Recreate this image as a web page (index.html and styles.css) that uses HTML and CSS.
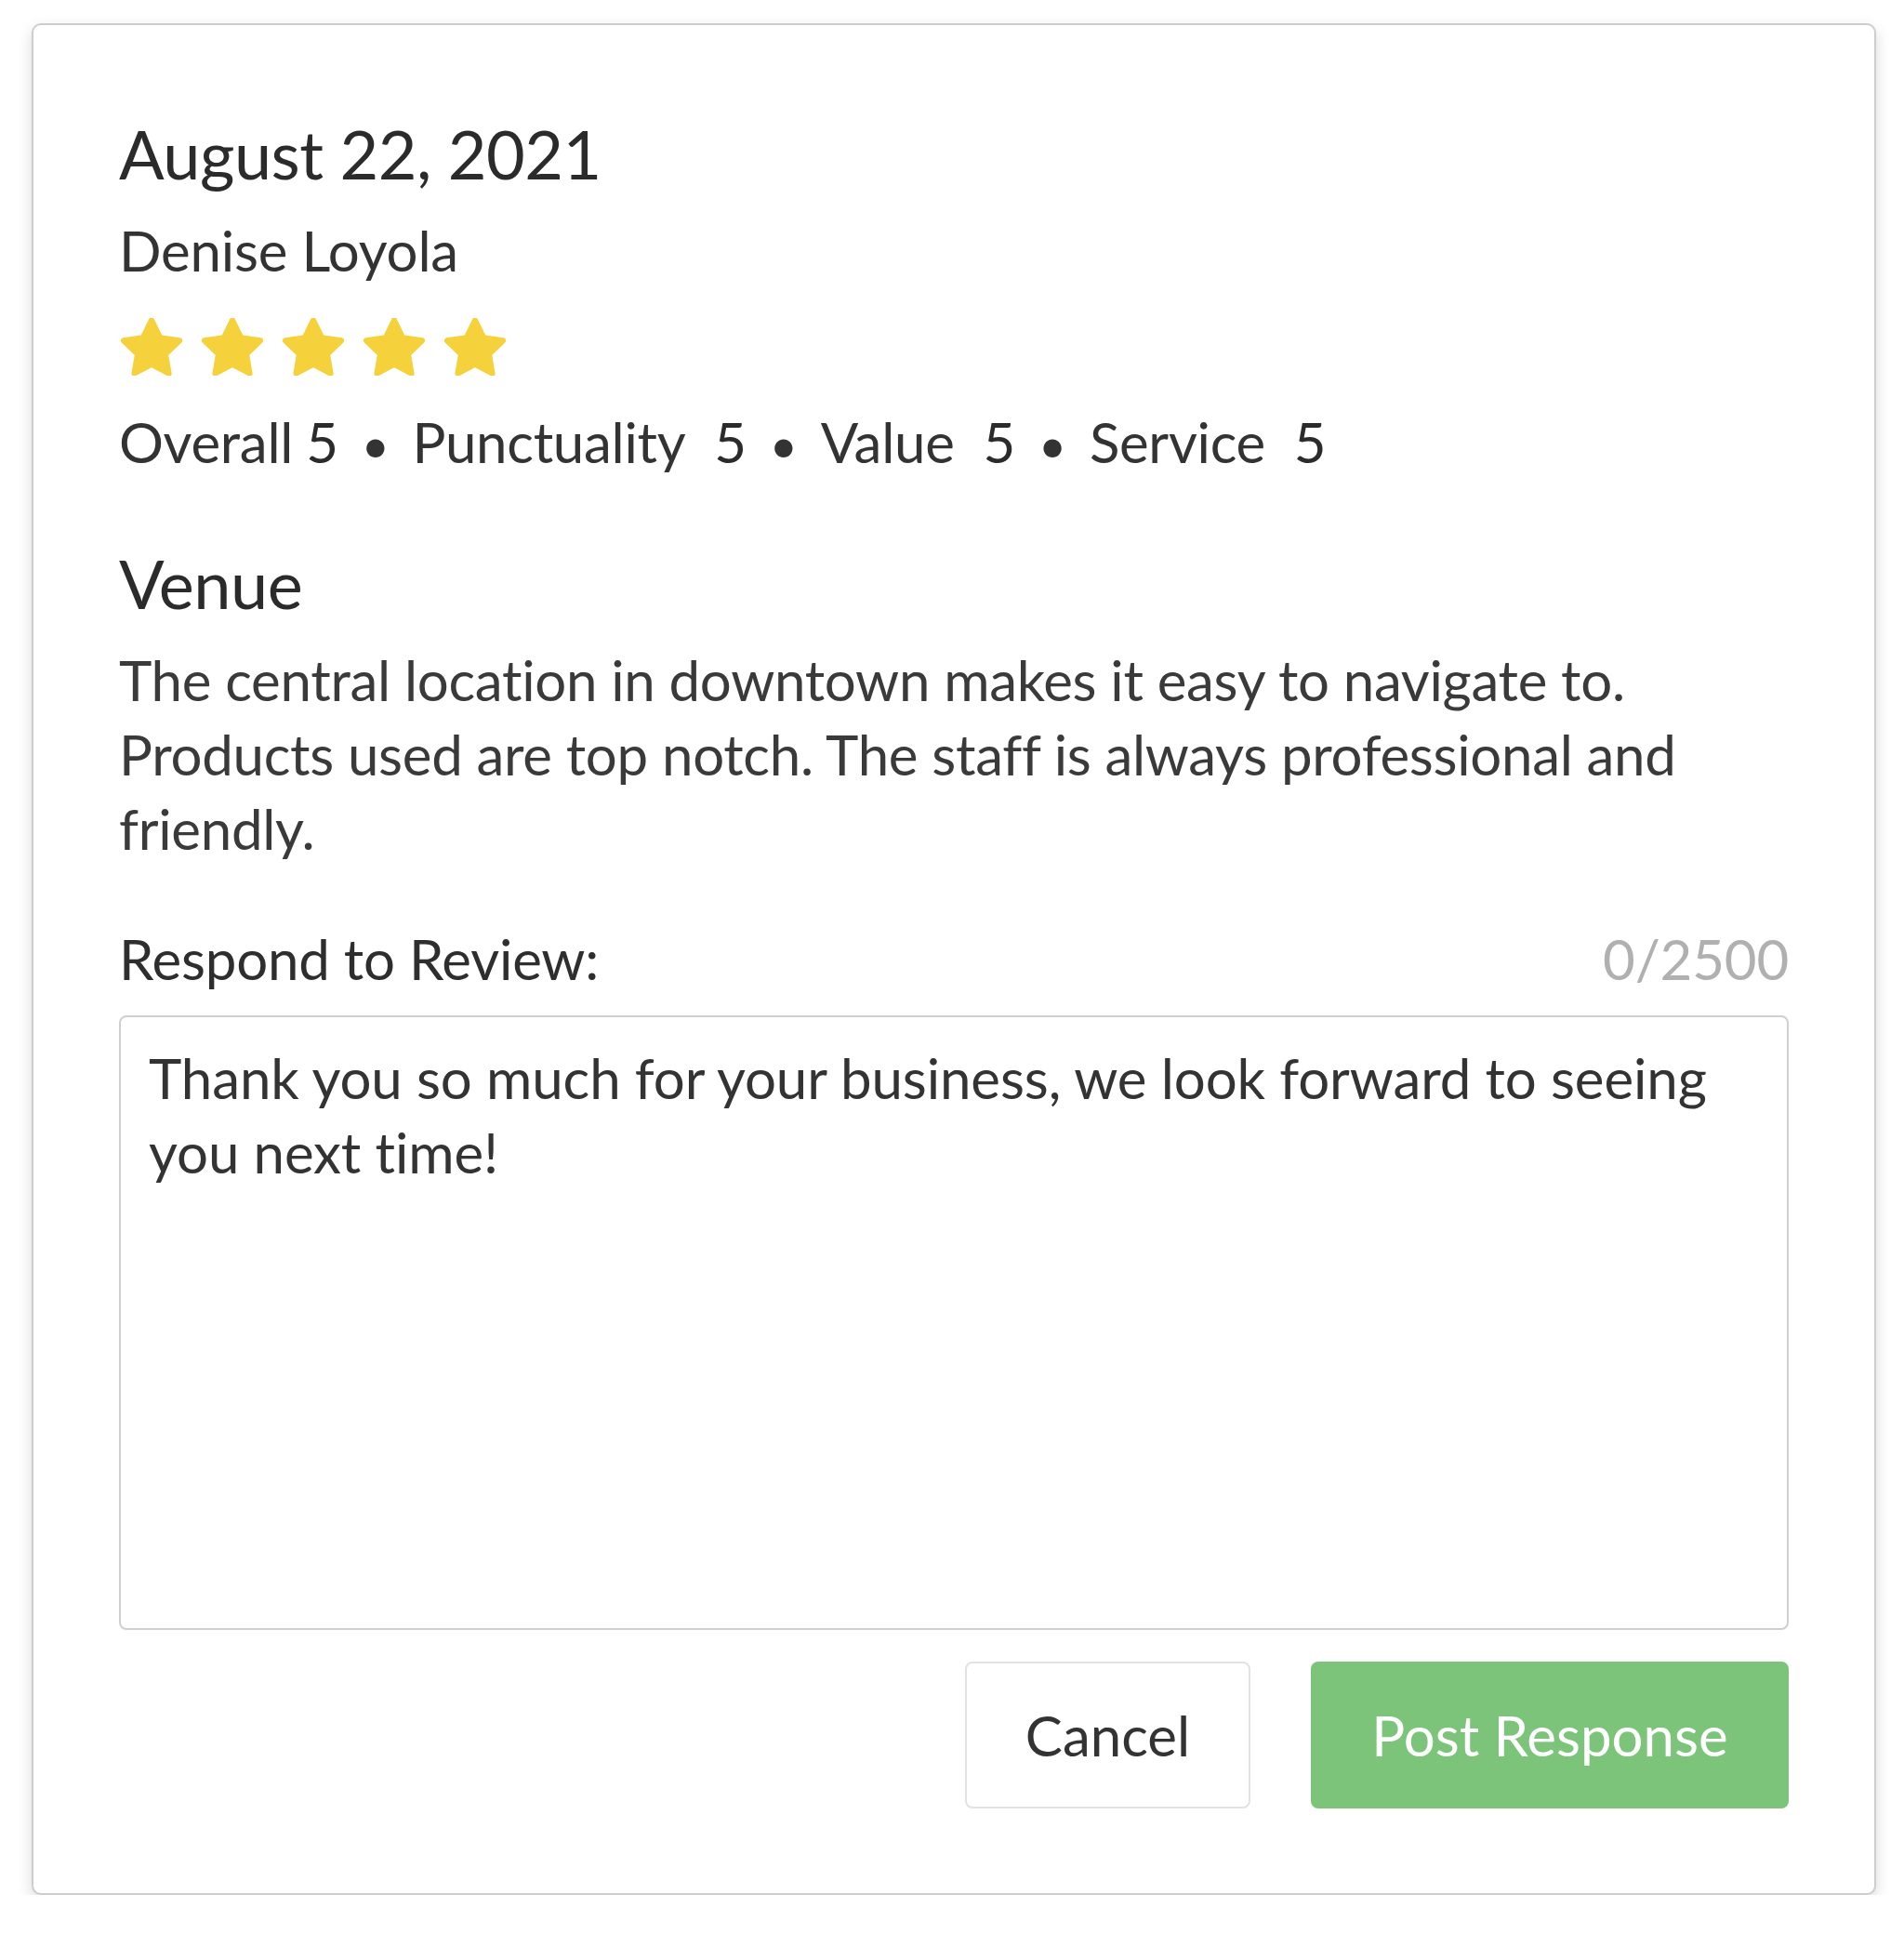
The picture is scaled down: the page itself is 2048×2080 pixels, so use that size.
FILE: index.html
```html
<!DOCTYPE html>
<html lang="en">
<head>
<meta charset="utf-8">
<title>Review</title>
<link rel="stylesheet" href="styles.css">
</head>
<body>
<div class="card">
  <div class="date">August 22, 2021</div>
  <div class="name">Denise Loyola</div>
  <div class="stars">
    <svg class="star" viewBox="1 1.2 22 20.6"><polygon points="12,2 15.09,8.26 22,9.27 17,14.14 18.18,21.02 12,17.77 5.82,21.02 7,14.14 2,9.27 8.91,8.26"/></svg>
    <svg class="star" viewBox="1 1.2 22 20.6"><polygon points="12,2 15.09,8.26 22,9.27 17,14.14 18.18,21.02 12,17.77 5.82,21.02 7,14.14 2,9.27 8.91,8.26"/></svg>
    <svg class="star" viewBox="1 1.2 22 20.6"><polygon points="12,2 15.09,8.26 22,9.27 17,14.14 18.18,21.02 12,17.77 5.82,21.02 7,14.14 2,9.27 8.91,8.26"/></svg>
    <svg class="star" viewBox="1 1.2 22 20.6"><polygon points="12,2 15.09,8.26 22,9.27 17,14.14 18.18,21.02 12,17.77 5.82,21.02 7,14.14 2,9.27 8.91,8.26"/></svg>
    <svg class="star" viewBox="1 1.2 22 20.6"><polygon points="12,2 15.09,8.26 22,9.27 17,14.14 18.18,21.02 12,17.77 5.82,21.02 7,14.14 2,9.27 8.91,8.26"/></svg>
  </div>
  <div class="ratings">
    <span class="metric"><span class="label overall">Overall</span><span class="value">5</span></span>
    <span class="sep">•</span>
    <span class="metric"><span class="label">Punctuality</span><span class="value">5</span></span>
    <span class="sep">•</span>
    <span class="metric"><span class="label">Value</span><span class="value">5</span></span>
    <span class="sep">•</span>
    <span class="metric"><span class="label">Service</span><span class="value">5</span></span>
  </div>
  <div class="section-title">Venue</div>
  <p class="review-text">The central location in downtown makes it easy to navigate to. Products used are top notch. The staff is always professional and friendly.</p>
  <div class="respond-row">
    <span class="respond-label">Respond to Review:</span>
    <span class="counter">0/2500</span>
  </div>
  <textarea class="response">Thank you so much for your business, we look forward to seeing you next time!</textarea>
  <div class="actions">
    <button class="btn btn-cancel">Cancel</button>
    <button class="btn btn-post">Post Response</button>
  </div>
</div>
</body>
</html>
```

FILE: styles.css
```css
html, body {
  margin: 0;
  padding: 0;
  background: #ffffff;
}

body {
  font-family: Lato, "Open Sans", sans-serif;
  font-variant-ligatures: none;
  color: #333333;
}

.card {
  box-sizing: border-box;
  width: 1984px;
  margin: 25px 0 0 34px;
  padding: 93px 92px 91px 92px;
  border: 2px solid #cdcdcd;
  border-radius: 10px;
  background: #ffffff;
  box-shadow: 0 6px 16px rgba(0, 0, 0, 0.15);
  display: flex;
  flex-direction: column;
}

.date {
  font-size: 72px;
  letter-spacing: -0.5px;
  line-height: 90px;
  color: #2b2b2b;
}

.name {
  margin-top: 19px;
  font-size: 60px;
  letter-spacing: -0.2px;
  line-height: 80px;
  color: #333333;
}

.stars {
  margin-top: 33px;
  display: flex;
  gap: 17px;
  height: 62px;
}

.star {
  width: 70px;
  height: 62px;
  display: block;
}

.star polygon {
  fill: #f5d23c;
  stroke: #f5d23c;
  stroke-width: 2;
  stroke-linejoin: round;
}

.ratings {
  margin-top: 31px;
  display: flex;
  align-items: baseline;
  font-size: 60px;
  letter-spacing: -0.3px;
  line-height: 80px;
  color: #333333;
}

.metric {
  display: flex;
  align-items: baseline;
}

.value {
  margin-left: 31px;
  color: #2b2b2b;
}

.overall + .value {
  margin-left: 14px;
}

.sep {
  margin: 0 25px;
  font-size: 52px;
}

.section-title {
  margin-top: 64px;
  font-size: 72px;
  letter-spacing: -0.5px;
  line-height: 90px;
  color: #2b2b2b;
}

.review-text {
  margin: 19px 0 0 0;
  font-size: 60px;
  letter-spacing: -0.3px;
  line-height: 80px;
  color: #3a3a3a;
}

.respond-row {
  margin-top: 60px;
  display: flex;
  justify-content: space-between;
  align-items: baseline;
  font-size: 60px;
  letter-spacing: -0.2px;
  line-height: 80px;
}

.respond-label {
  color: #2e2e2e;
}

.counter {
  color: #b0b0b0;
}

.response {
  box-sizing: border-box;
  margin-top: 21px;
  width: 100%;
  height: 661px;
  padding: 25px 30px;
  border: 2px solid #cfcfcf;
  border-radius: 8px;
  font-family: Lato, "Open Sans", sans-serif;
  font-variant-ligatures: none;
  font-size: 60px;
  letter-spacing: -0.1px;
  line-height: 80px;
  color: #333333;
  resize: none;
  outline: none;
  background: #ffffff;
}

.actions {
  margin-top: 34px;
  display: flex;
  justify-content: flex-end;
  gap: 65px;
}

.btn {
  box-sizing: border-box;
  height: 158px;
  font-family: Lato, "Open Sans", sans-serif;
  font-variant-ligatures: none;
  font-size: 60px;
  border-radius: 8px;
  cursor: pointer;
}

.btn-cancel {
  width: 307px;
  background: #ffffff;
  border: 2px solid #e2e2e2;
  color: #333333;
}

.btn-post {
  width: 514px;
  background: #7cc47a;
  border: none;
  color: #ffffff;
}
```
